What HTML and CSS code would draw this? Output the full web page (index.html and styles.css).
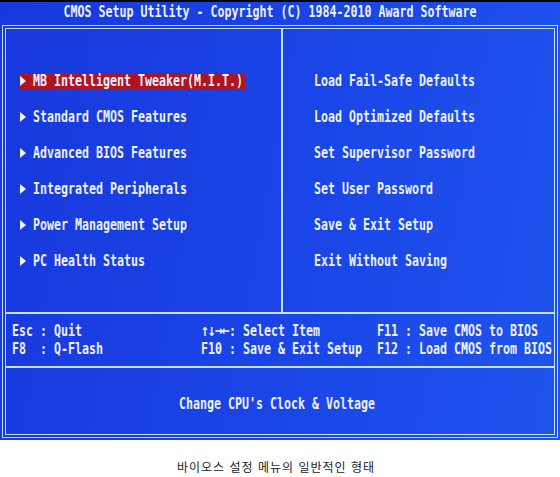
FILE: index.html
```html
<!DOCTYPE html>
<html lang="ko">
<head>
    <meta charset="UTF-8">
    <title>CMOS Setup Utility</title>
    <link rel="stylesheet" href="styles.css">
</head>
<body>
    <div class="screen">
        <div class="title"><span class="t">CMOS Setup Utility - Copyright (C) 1984-2010 Award Software</span></div>
        <div class="frame">
            <div class="menu">
                <ul class="col col-left">
                    <li><span class="sel active"><span class="arrow"></span><span class="t">MB Intelligent Tweaker(M.I.T.)</span></span></li>
                    <li><span class="sel"><span class="arrow"></span><span class="t">Standard CMOS Features</span></span></li>
                    <li><span class="sel"><span class="arrow"></span><span class="t">Advanced BIOS Features</span></span></li>
                    <li><span class="sel"><span class="arrow"></span><span class="t">Integrated Peripherals</span></span></li>
                    <li><span class="sel"><span class="arrow"></span><span class="t">Power Management Setup</span></span></li>
                    <li><span class="sel"><span class="arrow"></span><span class="t">PC Health Status</span></span></li>
                </ul>
                <ul class="col col-right">
                    <li><span class="t">Load Fail-Safe Defaults</span></li>
                    <li><span class="t">Load Optimized Defaults</span></li>
                    <li><span class="t">Set Supervisor Password</span></li>
                    <li><span class="t">Set User Password</span></li>
                    <li><span class="t">Save &amp; Exit Setup</span></li>
                    <li><span class="t">Exit Without Saving</span></li>
                </ul>
            </div>
            <div class="keys">
                <div><span class="t">Esc : Quit</span></div>
                <div><span class="t"><span class="keyarrows">↑↓→←</span>: Select Item</span></div>
                <div><span class="t">F11 : Save CMOS to BIOS</span></div>
                <div><span class="t">F8  : Q-Flash</span></div>
                <div><span class="t">F10 : Save &amp; Exit Setup</span></div>
                <div><span class="t">F12 : Load CMOS from BIOS</span></div>
            </div>
            <div class="help"><span class="t">Change CPU's Clock &amp; Voltage</span></div>
        </div>
    </div>
    <p class="caption">바이오스 설정 메뉴의 일반적인 형태</p>
</body>
</html>
```

FILE: styles.css
```css
body {
    margin: 0;
    width: 560px;
    background-color: #fff;
}
.screen {
    height: 440px;
    box-sizing: border-box;
    border-top: 2px solid #000;
    background: linear-gradient(100deg, #1738dc 0%, #1a44e6 50%, #1e54ee 100%);
    color: #eef2ff;
    font-family: "DejaVu Sans Mono", "Liberation Mono", monospace;
    font-size: 11.63px;
    font-weight: bold;
}
.t {
    display: inline-block;
    white-space: pre;
    transform: scaleY(1.3);
}
.keyarrows {
    display: inline-block;
    width: 28px;
    letter-spacing: -1px;
    font-size: 13px;
}
.title {
    height: 23px;
    line-height: 20px;
    text-align: center;
    padding-right: 20px;
}
.frame {
    height: 413px;
    margin: 0 2px;
    box-sizing: border-box;
    border: 4px double #c4dcff;
    display: flex;
    flex-direction: column;
}
.menu {
    height: 283px;
    flex: none;
    display: grid;
    grid-template-columns: 277px 1fr;
}
.col {
    list-style: none;
    margin: 0;
    padding: 34px 0 0 0;
}
.col li {
    height: 36px;
    display: flex;
    align-items: center;
}
.col-left {
    border-right: 2px solid #c8e0ff;
}
.col-left li {
    padding-left: 13px;
}
.col-right li {
    padding-left: 31px;
}
.sel {
    display: flex;
    align-items: center;
    gap: 7px;
    height: 17px;
    padding: 0 2px 0 1px;
}
.sel.active {
    background-color: #b01420;
}
.arrow {
    width: 0;
    height: 0;
    border-left: 6px solid #eef2ff;
    border-top: 5px solid transparent;
    border-bottom: 5px solid transparent;
}
.keys {
    flex: none;
    box-sizing: border-box;
    height: 56px;
    border-top: 2px solid #c8e0ff;
    border-bottom: 2px solid #c8e0ff;
    padding: 8px 0 0 6px;
    display: grid;
    grid-template-columns: 189px 176px 1fr;
    grid-template-rows: 18px 18px;
    align-content: start;
    line-height: 18px;
}
.help {
    flex: 1;
    display: flex;
    align-items: center;
    justify-content: center;
    padding: 6px 6px 0 0;
}
.caption {
    margin: 19px 0 0 0;
    text-align: center;
    padding-right: 8px;
    font-family: "Noto Sans CJK KR", sans-serif;
    font-size: 12px;
    line-height: 16px;
    letter-spacing: 1px;
    color: #222;
}
```
